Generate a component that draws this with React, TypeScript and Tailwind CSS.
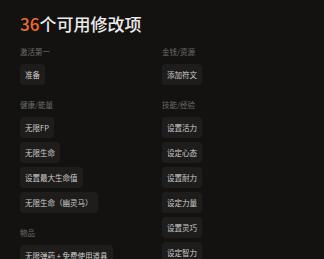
import React from "react";

type Section = { title: string; items: string[] };

const leftSections: Section[] = [
  { title: "激活第一", items: ["准备"] },
  {
    title: "健康/能量",
    items: ["无限FP", "无限生命", "设置最大生命值", "无限生命（幽灵马）"],
  },
  { title: "物品", items: ["无限弹药 + 免费使用道具"] },
];

const rightSections: Section[] = [
  { title: "金钱/资源", items: ["添加符文"] },
  {
    title: "技能/经验",
    items: ["设置活力", "设定心态", "设置耐力", "设定力量", "设置灵巧", "设定智力"],
  },
];

const Group = ({ title, items }: Section) => (
  <div className="flex flex-col">
    <div className="text-[7.5px] leading-[10px] text-[#6e6c6a]">{title}</div>
    <div className="mt-[7px] flex flex-col items-start gap-[4px]">
      {items.map((item) => (
        <div
          key={item}
          className="h-[21px] px-[5px] flex items-center rounded-[4px] bg-[#1e1d1c] text-[7.5px] text-[#cfcdcb] whitespace-nowrap"
        >
          {item}
        </div>
      ))}
    </div>
  </div>
);

export default function App() {
  return (
    <div
      className="w-[324px] h-[259px] overflow-hidden bg-[#131211] px-[20px] pt-[12px]"
      style={{ fontFamily: '"Noto Sans CJK SC", "Noto Sans", sans-serif' }}
    >
      <h1 className="text-[17px] leading-[24px] font-medium text-[#ecebea]">
        <span className="text-[#f06b2b]">36</span>个可用修改项
      </h1>
      <div className="mt-[11px] grid grid-cols-2">
        <div className="flex flex-col gap-[15px]">
          {leftSections.map((s) => (
            <Group key={s.title} {...s} />
          ))}
        </div>
        <div className="flex flex-col gap-[15px]">
          {rightSections.map((s) => (
            <Group key={s.title} {...s} />
          ))}
        </div>
      </div>
    </div>
  );
}
